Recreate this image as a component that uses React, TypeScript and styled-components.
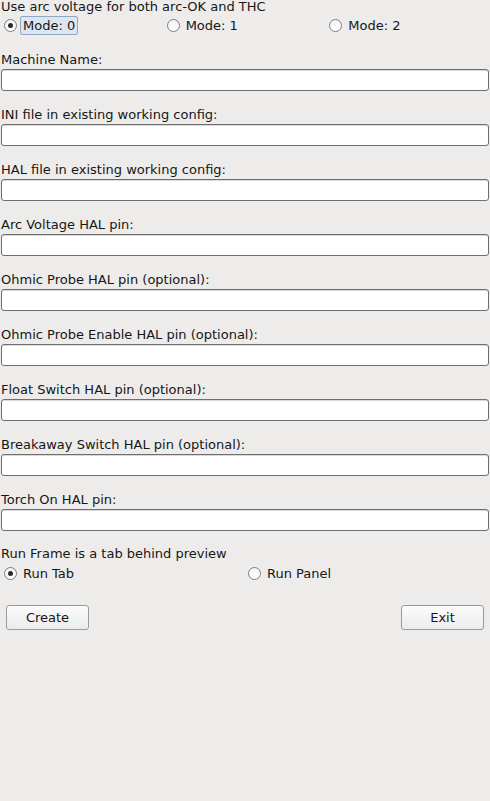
import React, { useState } from "react";
import styled, { createGlobalStyle } from "styled-components";

const Global = createGlobalStyle`
  html, body { margin: 0; padding: 0; background: #edeceb; }
  body { font-family: "DejaVu Sans", "Liberation Sans", sans-serif; font-size: 13px; color: #161616; }
  * { box-sizing: border-box; }
`;

const Page = styled.div`
  width: 490px;
  height: 801px;
  background: #edeceb;
  display: flex;
  flex-direction: column;
  padding: 0 1px;
`;

const Heading = styled.div`
  height: 16px;
  line-height: 16px;
  margin-top: -1px;
`;

const RadioRow = styled.div<{ $cols: number; $top?: number }>`
  display: grid;
  grid-template-columns: repeat(${(p) => p.$cols}, 1fr);
  height: 20px;
  margin-top: ${(p) => p.$top ?? 0}px;
  align-items: center;
`;

const RadioItem = styled.label`
  display: flex;
  align-items: center;
  gap: 3px;
  padding-left: 3px;
  cursor: default;
`;

const Circle = styled.span<{ $on: boolean }>`
  width: 13px;
  height: 13px;
  border-radius: 50%;
  border: 1px solid #7d7d7d;
  background: linear-gradient(#f4f4f4, #ffffff);
  display: flex;
  align-items: center;
  justify-content: center;
  flex: none;
  &::after {
    content: "";
    width: 5px;
    height: 5px;
    border-radius: 50%;
    background: #2a2a2a;
    display: ${(p) => (p.$on ? "block" : "none")};
  }
`;

const RadioText = styled.span<{ $focus?: boolean }>`
  line-height: 15px;
  padding: 1px 2px;
  border: 1px solid ${(p) => (p.$focus ? "#90a8c6" : "transparent")};
  background: ${(p) => (p.$focus ? "#dde6ef" : "transparent")};
  border-radius: 2px;
`;

const Field = styled.div<{ $top: number }>`
  display: flex;
  flex-direction: column;
  margin-top: ${(p) => p.$top}px;
`;

const FieldLabel = styled.div`
  height: 16px;
  line-height: 16px;
`;

const Input = styled.input`
  height: 22px;
  width: 100%;
  border: 1px solid #6f6f6f;
  border-radius: 3px;
  background: #ffffff;
  box-shadow: inset 0 1px 0 #d8d8d8;
  outline: none;
  font: inherit;
  padding: 0 4px;
  margin: 1px 0 0;
`;

const SectionLabel = styled.div`
  margin-top: 15px;
  height: 16px;
  line-height: 16px;
`;

const ButtonBar = styled.div`
  display: flex;
  justify-content: space-between;
  padding: 0 5px;
  margin-top: 22px;
`;

const Button = styled.button`
  width: 83px;
  height: 25px;
  border: 1px solid #9a9a9a;
  border-radius: 3px;
  background: linear-gradient(#fbfbfb, #ececec);
  font: inherit;
  color: #161616;
  padding: 0;
`;

const fields = [
  "Machine Name:",
  "INI file in existing working config:",
  "HAL file in existing working config:",
  "Arc Voltage HAL pin:",
  "Ohmic Probe HAL pin (optional):",
  "Ohmic Probe Enable HAL pin (optional):",
  "Float Switch HAL pin (optional):",
  "Breakaway Switch HAL pin (optional):",
  "Torch On HAL pin:",
];

export default function App() {
  const [mode, setMode] = useState(0);
  const [run, setRun] = useState(0);
  return (
    <Page>
      <Global />
      <Heading>Use arc voltage for both arc-OK and THC</Heading>
      <RadioRow $cols={3}>
        {[0, 1, 2].map((m) => (
          <RadioItem key={m} onClick={() => setMode(m)}>
            <Circle $on={mode === m} />
            <RadioText $focus={m === 0}>Mode: {m}</RadioText>
          </RadioItem>
        ))}
      </RadioRow>
      {fields.map((f, i) => (
        <Field key={f} $top={i === 0 ? 17 : 16}>
          <FieldLabel>{f}</FieldLabel>
          <Input />
        </Field>
      ))}
      <SectionLabel>Run Frame is a tab behind preview</SectionLabel>
      <RadioRow $cols={2} $top={1}>
        {["Run Tab", "Run Panel"].map((r, i) => (
          <RadioItem key={r} onClick={() => setRun(i)}>
            <Circle $on={run === i} />
            <RadioText>{r}</RadioText>
          </RadioItem>
        ))}
      </RadioRow>
      <ButtonBar>
        <Button>Create</Button>
        <Button>Exit</Button>
      </ButtonBar>
    </Page>
  );
}
